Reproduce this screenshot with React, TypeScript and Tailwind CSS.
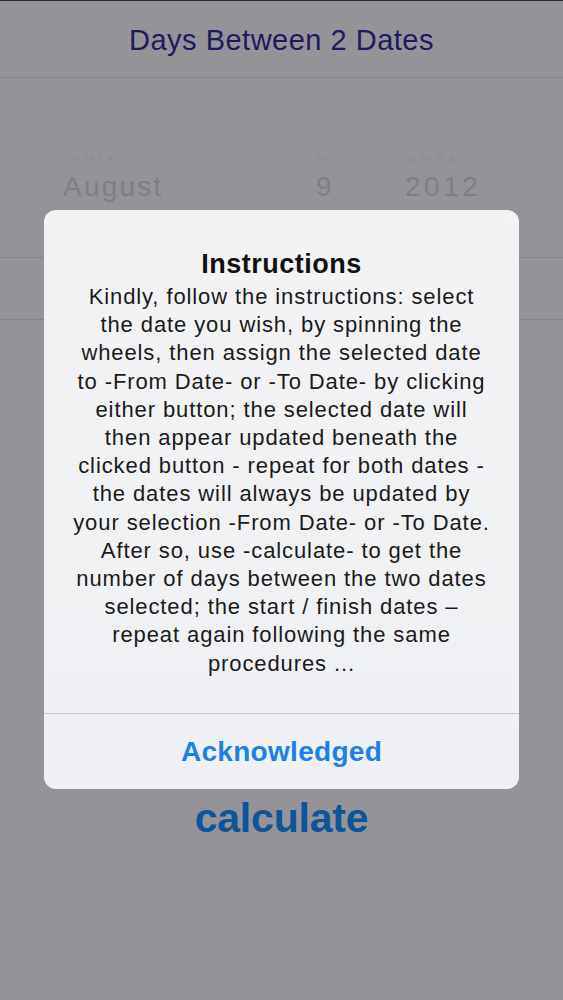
const lines = [
  "Kindly, follow the instructions: select",
  "the date you wish, by spinning the",
  "wheels, then assign the selected date",
  "to -From Date- or -To Date- by clicking",
  "either button; the selected date will",
  "then appear updated beneath the",
  "clicked button - repeat for both dates -",
  "the dates will always be updated by",
  "your selection -From Date- or -To Date.",
  "After so, use -calculate- to get the",
  "number of days between the two dates",
  "selected; the start / finish dates –",
  "repeat again following the same",
  "procedures ...",
]

export default function App() {
  return (
    <div className="relative w-[563px] h-[1000px] overflow-hidden bg-[#959397] [font-family:'Liberation_Sans',Arial,sans-serif]">
      <div className="h-px bg-[#2a2a2c]" />
      {/* Header */}
      <div className="h-[77px] flex items-center justify-center border-b border-[#858387]">
        <h1 className="text-[29px] text-[#1d1b5e] tracking-[0.5px] mt-[3px]">Days Between 2 Dates</h1>
      </div>

      {/* Picker */}
      <div className="h-[180px] border-b border-[#858387] pt-[77px]">
        <div className="h-[6px] overflow-hidden text-[#8f8d91] text-[22px] tracking-[2px]">
          <div className="flex -mt-[18px]">
            <span className="ml-[70px] w-[246px]">July</span>
            <span className="w-[89px]">8</span>
            <span>2011</span>
          </div>
        </div>
        <div className="flex items-center text-[28px] text-[#807e82] tracking-[2.2px] mt-[5px]">
          <span className="ml-[63px] w-[253px]">August</span>
          <span className="w-[89px]">9</span>
          <span className="tracking-[3.5px]">2012</span>
        </div>
      </div>

      <div className="h-[62px] border-b border-[#858387]" />

      <div className="flex justify-center mt-[468px]">
        <span className="text-[41px] font-bold text-[#0b5599] tracking-[-0.2px]">calculate</span>
      </div>

      {/* Alert dialog */}
      <div className="absolute left-[44px] top-[210px] w-[475px] h-[579px] rounded-[12px] bg-gradient-to-b from-[#f3f3f5] to-[#eff0f3] flex flex-col overflow-hidden">
        <div className="flex-1 pt-[37px] text-center text-[#111]">
          <h2 className="text-[27px] font-bold leading-[34px] tracking-[0.5px]">Instructions</h2>
          <div className="text-[22px] leading-[28.2px] tracking-[0.9px] text-[#1a1a1a] mt-[2px]">
            {lines.map((l) => (
              <div key={l} className="whitespace-nowrap">{l}</div>
            ))}
          </div>
        </div>
        <div className="h-[76px] border-t border-[#c9c9cd] flex items-center justify-center">
          <span className="text-[28px] text-[#1b82e4] font-semibold tracking-[0.3px]">Acknowledged</span>
        </div>
      </div>
    </div>
  )
}
